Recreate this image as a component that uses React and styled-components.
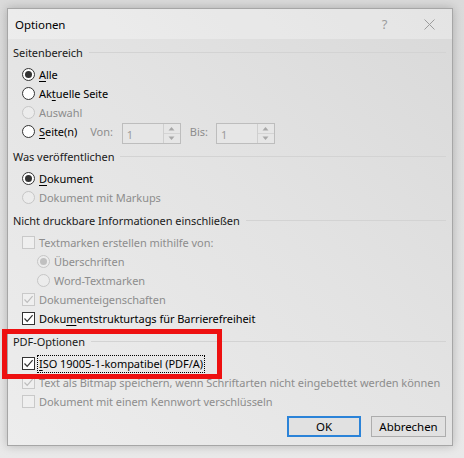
import React from "react";
import styled, { createGlobalStyle, css } from "styled-components";

const GlobalStyle = createGlobalStyle`
  html, body { margin: 0; padding: 0; }
  body {
    background: #e0e0e0;
    font-family: "Noto Sans", "Open Sans", sans-serif;
    font-size: 11px;
    letter-spacing: -0.05px;
    color: #000;
  }
`;

const Stage = styled.div`
  width: 464px;
  height: 458px;
  box-sizing: border-box;
  padding: 8px 11px 12px 7px;
  background: linear-gradient(180deg, #dadada 0%, #e2e2e2 60%, #e9e9e9 100%);
`;

const Dialog = styled.div`
  width: 446px;
  height: 438px;
  box-sizing: border-box;
  border: 1px solid #a6a6a6;
  display: flex;
  flex-direction: column;
  background: linear-gradient(225deg, #d9d9d9 0%, #e3e3e3 45%, #ededed 100%);
  box-shadow: 0 0 9px rgba(0, 0, 0, 0.22);
`;

const TitleBar = styled.div`
  height: 30px;
  display: flex;
  align-items: center;
  padding: 0 0 0 7px;
  background: rgba(255, 255, 255, 0.3);
`;

const Title = styled.div`
  flex: 1;
  color: #000;
  font-size: 11.5px;
`;

const TitleButton = styled.div`
  width: 45px;
  height: 30px;
  display: flex;
  align-items: center;
  justify-content: center;
  color: #9c9c9c;
  font-size: 13px;
`;

const Body = styled.div`
  flex: 1;
  display: flex;
  flex-direction: column;
  padding: 0 6px 8px 5px;
`;

const Section = styled.div`
  position: relative;
  display: flex;
  flex-direction: column;
  margin-top: ${(p) => p.$mt || 0}px;
`;

const Header = styled.div`
  display: flex;
  align-items: center;
  height: 17px;
  padding: 5px 0 4px;
  color: #1a1a1a;
`;

const HeaderLine = styled.div`
  flex: 1;
  height: 1px;
  margin-left: 6px;
  background: #d3d3d3;
`;

const Row = styled.div`
  display: flex;
  align-items: center;
  height: 19px;
  padding-left: ${(p) => p.$indent || 9}px;
  white-space: nowrap;
  color: ${(p) => (p.$disabled ? "#8d8d8d" : "#000")};
`;

const RadioCircle = styled.span`
  box-sizing: border-box;
  width: 13px;
  height: 13px;
  border-radius: 50%;
  border: 1px solid ${(p) => (p.$disabled ? "#c6c6c6" : "#333")};
  background: ${(p) => (p.$disabled ? "#ececec" : "#fff")};
  display: flex;
  align-items: center;
  justify-content: center;
  margin-right: 4px;
  flex: none;
  &::after {
    content: "";
    display: ${(p) => (p.$checked ? "block" : "none")};
    width: 7px;
    height: 7px;
    border-radius: 50%;
    background: ${(p) => (p.$disabled ? "#c0c0c0" : "#333")};
  }
`;

const CheckBox = styled.span`
  box-sizing: border-box;
  width: 13px;
  height: 13px;
  border: 1px solid ${(p) => (p.$disabled ? "#c9c9c9" : "#333")};
  background: ${(p) => (p.$disabled ? "#efefef" : "#fff")};
  display: flex;
  align-items: center;
  justify-content: center;
  margin-right: 4px;
  flex: none;
`;

const Label = styled.span`
  ${(p) =>
    p.$focus &&
    css`
      outline: 1px dotted #000;
      outline-offset: 0;
      padding: 0 1px;
      margin-left: -1px;
      line-height: 16px;
    `}
`;

const U = styled.span`
  text-decoration: underline;
  text-underline-offset: 2px;
`;

const FieldLabel = styled.span`
  color: #8d8d8d;
  margin: 0 ${(p) => p.$mr || 8}px 0 ${(p) => p.$ml || 0}px;
`;

const Spin = styled.div`
  box-sizing: border-box;
  width: 59px;
  height: 21px;
  margin-top: 3px;
  border: 1px solid #bdbdbd;
  background: #e6e6e6;
  display: flex;
`;

const SpinValue = styled.div`
  flex: 1;
  color: #9c9c9c;
  padding: 3px 0 0 4px;
`;

const SpinButtons = styled.div`
  width: 16px;
  border-left: 1px solid #cfcfcf;
  display: flex;
  flex-direction: column;
`;

const SpinHalf = styled.div`
  flex: 1;
  display: flex;
  align-items: center;
  justify-content: center;
  border-top: ${(p) => (p.$bottom ? "1px solid #d4d4d4" : "none")};
`;

const Highlight = styled.div`
  position: absolute;
  left: -11px;
  top: 1px;
  width: 220px;
  height: 50px;
  box-sizing: border-box;
  border: 5px solid #ee1010;
  pointer-events: none;
`;

const Footer = styled.div`
  margin-top: auto;
  display: flex;
  justify-content: flex-end;
  gap: 10px;
`;

const Button = styled.button`
  box-sizing: border-box;
  width: ${(p) => p.$w || 75}px;
  height: 21px;
  padding: 0;
  font: inherit;
  font-size: 11.5px;
  letter-spacing: inherit;
  color: #000;
  background: #e1e1e1;
  border: ${(p) => (p.$default ? "2px solid #2b83d8" : "1px solid #adadad")};
`;

const Check = ({ disabled }) => (
  <svg width="11" height="11" viewBox="0 0 11 11">
    <path
      d="M1.5 5.5 L4.2 8.3 L9.6 2.2"
      fill="none"
      stroke={disabled ? "#bdbdbd" : "#333"}
      strokeWidth="1.2"
    />
  </svg>
);

const Radio = ({ checked, disabled, indent, children }) => (
  <Row $indent={indent} $disabled={disabled}>
    <RadioCircle $checked={checked} $disabled={disabled} />
    {children}
  </Row>
);

const CheckRow = ({ checked, disabled, children, indent }) => (
  <Row $indent={indent} $disabled={disabled}>
    <CheckBox $disabled={disabled}>{checked && <Check disabled={disabled} />}</CheckBox>
    {children}
  </Row>
);

const Arrow = ({ up }) => (
  <svg width="7" height="5" viewBox="0 0 7 5">
    <path d={up ? "M0.5 4.5 L3.5 1 L6.5 4.5 Z" : "M0.5 0.5 L3.5 4 L6.5 0.5 Z"} fill="#a8a8a8" />
  </svg>
);

const SpinBox = () => (
  <Spin>
    <SpinValue>1</SpinValue>
    <SpinButtons>
      <SpinHalf>
        <Arrow up />
      </SpinHalf>
      <SpinHalf $bottom>
        <Arrow />
      </SpinHalf>
    </SpinButtons>
  </Spin>
);

export default function App() {
  return (
    <Stage>
      <GlobalStyle />
      <Dialog>
        <TitleBar>
          <Title>Optionen</Title>
          <TitleButton>?</TitleButton>
          <TitleButton>
            <svg width="11" height="11" viewBox="0 0 11 11">
              <path d="M0.5 0.5 L10.5 10.5 M10.5 0.5 L0.5 10.5" stroke="#9c9c9c" strokeWidth="1" />
            </svg>
          </TitleButton>
        </TitleBar>
        <Body>
          <Section>
            <Header>
              Seitenbereich
              <HeaderLine />
            </Header>
            <Radio checked>
              <span>
                <U>A</U>lle
              </span>
            </Radio>
            <Radio>
              <span>
                Ak<U>t</U>uelle Seite
              </span>
            </Radio>
            <Radio disabled>Auswahl</Radio>
            <Row>
              <RadioCircle />
              <span>
                <U>S</U>eite(n)
              </span>
              <FieldLabel $ml={13} $mr={9}>Von:</FieldLabel>
              <SpinBox />
              <FieldLabel $ml={9} $mr={8}>Bis:</FieldLabel>
              <SpinBox />
            </Row>
          </Section>
          <Section $mt={2}>
            <Header>
              Was veröffentlichen
              <HeaderLine />
            </Header>
            <Radio checked>
              <span>
                <U>D</U>okument
              </span>
            </Radio>
            <Radio disabled>Dokument mit Markups</Radio>
          </Section>
          <Section>
            <Header>
              Nicht druckbare Informationen einschließen
              <HeaderLine />
            </Header>
            <CheckRow disabled>Textmarken erstellen mithilfe von:</CheckRow>
            <Radio disabled checked indent={24}>
              Überschriften
            </Radio>
            <Radio disabled indent={24}>
              Word-Textmarken
            </Radio>
            <CheckRow disabled checked>
              Dokumenteigenschaften
            </CheckRow>
            <CheckRow checked>
              <span>
                Doku<U>m</U>entstrukturtags für Barrierefreiheit
              </span>
            </CheckRow>
          </Section>
          <Section>
            <Header>
              PDF-Optionen
              <HeaderLine />
            </Header>
            <CheckRow checked>
              <Label $focus>
                <U>I</U>SO 19005-1-kompatibel (PDF/A)
              </Label>
            </CheckRow>
            <CheckRow disabled checked>
              Text als Bitmap speichern, wenn Schriftarten nicht eingebettet werden können
            </CheckRow>
            <CheckRow disabled>Dokument mit einem Kennwort verschlüsseln</CheckRow>
            <Highlight />
          </Section>
          <Footer>
            <Button $default $w={74}>OK</Button>
            <Button>Abbrechen</Button>
          </Footer>
        </Body>
      </Dialog>
    </Stage>
  );
}
